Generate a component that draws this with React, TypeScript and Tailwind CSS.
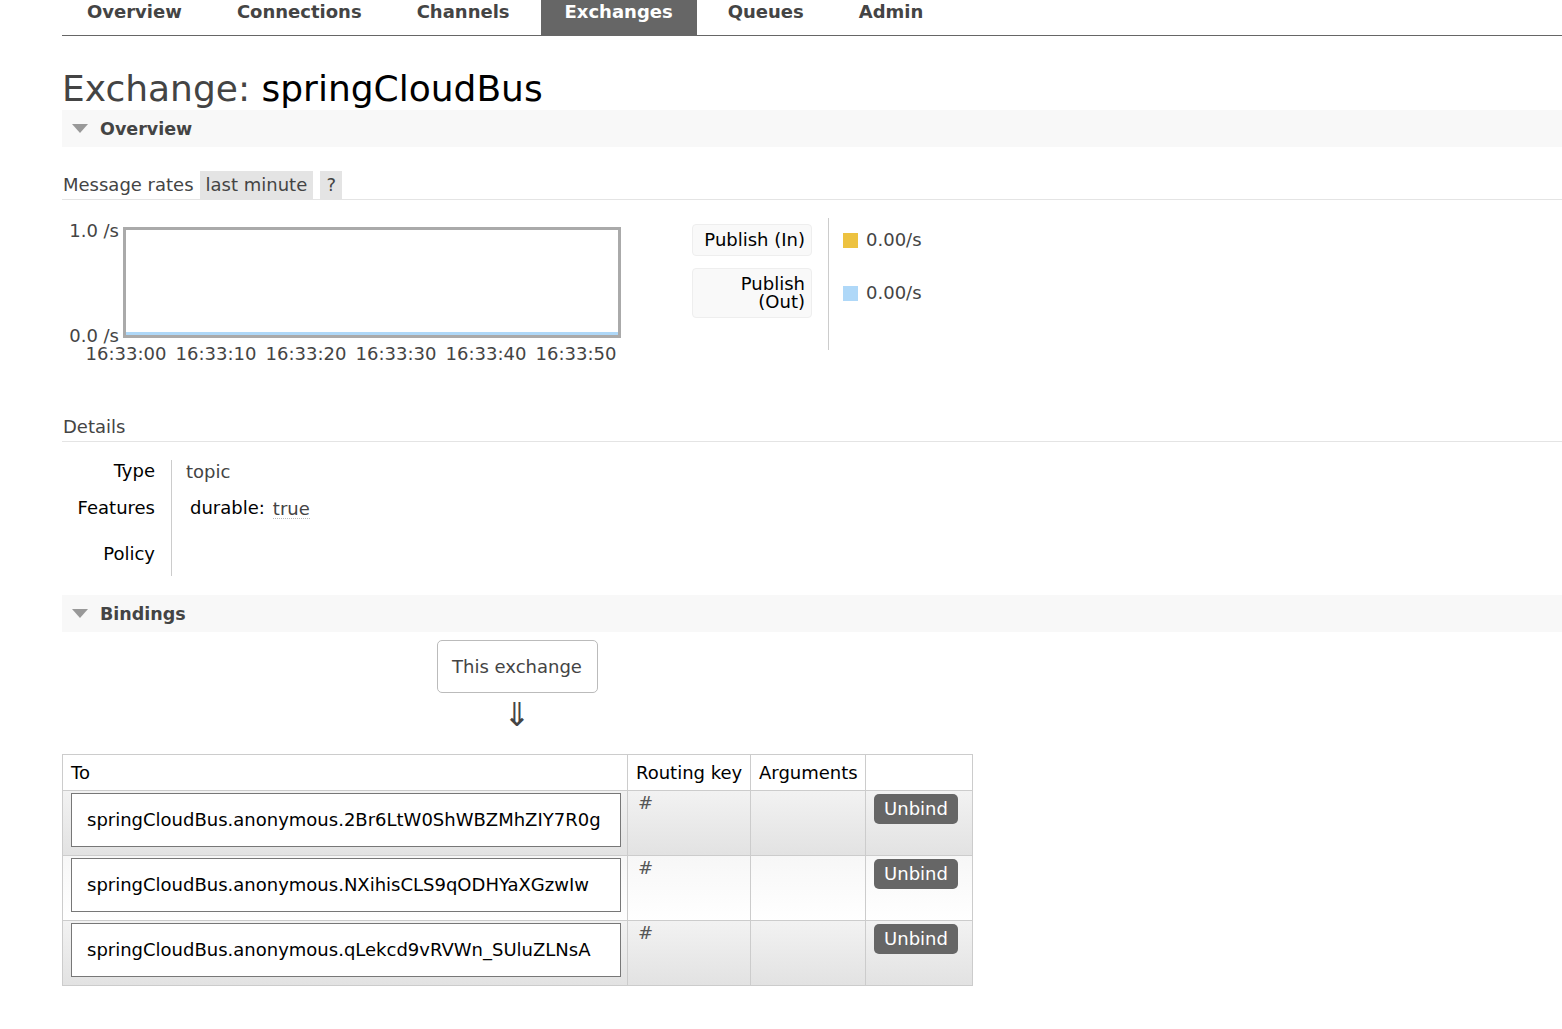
import React from "react";

const tabs = ["Overview", "Connections", "Channels", "Exchanges", "Queues", "Admin"];
const times = ["16:33:00", "16:33:10", "16:33:20", "16:33:30", "16:33:40", "16:33:50"];
const bindings = [
  "springCloudBus.anonymous.2Br6LtW0ShWBZMhZIY7R0g",
  "springCloudBus.anonymous.NXihisCLS9qODHYaXGzwIw",
  "springCloudBus.anonymous.qLekcd9vRVWn_SUluZLNsA",
];

function Toggle() {
  return (
    <svg width="16" height="9" viewBox="0 0 16 9" className="shrink-0">
      <polygon points="0,0 16,0 8,9" fill="#999" />
    </svg>
  );
}

function SectionBar({ title }: { title: string }) {
  return (
    <div className="flex h-[37px] items-center gap-[12px] bg-[#f8f8f8] pl-[10px]">
      <Toggle />
      <span className="text-[17.5px] font-bold text-[#444]">{title}</span>
    </div>
  );
}

export default function App() {
  return (
    <div className="min-h-screen bg-white pl-[62px] font-['DejaVu_Sans',Verdana,sans-serif] text-[18px] leading-[22px] text-black">
      {/* Tabs */}
      <nav className="flex h-[36px] gap-[7px] border-b border-[#666] pl-px">
        {tabs.map((t) => (
          <div
            key={t}
            className={
              t === "Exchanges"
                ? "h-[35px] bg-[#666] px-[24px] text-[18px] font-bold leading-[24px] text-white"
                : "h-[35px] px-[24px] text-[18px] font-bold leading-[24px] text-[#444]"
            }
          >
            {t}
          </div>
        ))}
      </nav>

      <h1 className="mt-[32px] text-[36px] font-normal leading-[42px] text-[#444]">
        Exchange: <span className="text-black">springCloudBus</span>
      </h1>

      <SectionBar title="Overview" />

      {/* Message rates */}
      <div className="mt-[24px] flex h-[29px] items-start border-b border-[#e4e4e4] pl-px text-[#444]">
        <span className="leading-[28px]">Message rates</span>
        <span className="ml-[6px] h-[28px] bg-[#e4e4e4] px-[6px] leading-[28px]">last minute</span>
        <span className="ml-[7px] h-[28px] w-[22px] bg-[#e4e4e4] text-center leading-[28px]">?</span>
      </div>

      <div className="mt-[18px] flex h-[150px]">
        {/* chart */}
        <div className="relative h-[150px] w-[630px] shrink-0 text-[#444]">
          <div className="absolute left-0 top-[3px] w-[57px] text-right leading-[20px]">1.0 /s</div>
          <div className="absolute left-0 top-[108px] w-[57px] text-right leading-[20px]">0.0 /s</div>
          <div className="absolute left-[61px] top-[9px] h-[111px] w-[498px] border-[3px] border-[#aaa] bg-white">
            <div className="absolute bottom-0 left-0 right-0 h-[3px] bg-[#afd8f8]" />
          </div>
          <div className="absolute left-[19px] top-[126px] flex">
            {times.map((t) => (
              <div key={t} className="w-[90px] text-center leading-[20px]">
                {t}
              </div>
            ))}
          </div>
        </div>

        {/* legend */}
        <div className="flex w-[120px] shrink-0 flex-col gap-[12px] pt-[6px] text-right">
          <div className="flex h-[32px] items-center justify-end rounded-[4px] border border-[#eee] bg-[#f9f9f9] pr-[6px]">
            Publish (In)
          </div>
          <div className="flex h-[50px] flex-col justify-center rounded-[4px] border border-[#eee] bg-[#f9f9f9] pr-[6px] leading-[18px]">
            <span>Publish</span>
            <span>(Out)</span>
          </div>
        </div>
        <div className="ml-[16px] flex h-[132px] flex-col gap-[12px] border-l border-[#ccc] pl-[14px] pt-[6px] text-[#444]">
          <div className="flex h-[32px] items-center gap-[8px]">
            <span className="h-[15px] w-[15px] bg-[#edc240]" />
            <span>0.00/s</span>
          </div>
          <div className="flex h-[50px] items-center gap-[8px]">
            <span className="h-[15px] w-[15px] bg-[#afd8f8]" />
            <span>0.00/s</span>
          </div>
        </div>
      </div>

      {/* Details */}
      <div className="mt-[48px] border-b border-[#e4e4e4] pb-[3px] pl-px text-[#444]">Details</div>

      <div className="mt-[18px] flex">
        <div className="flex w-[93px] flex-col text-right">
          <div className="h-[22px]">Type</div>
          <div className="mt-[15px] h-[22px]">Features</div>
          <div className="mt-[24px] h-[22px]">Policy</div>
          <div className="h-[11px]" />
        </div>
        <div className="ml-[16px] flex flex-col border-l border-[#ccc] pl-[14px]">
          <div className="h-[22px] pt-px text-[#444]">topic</div>
          <div className="mt-[15px] flex h-[22px] gap-[8px] pl-[4px]">
            <span>durable:</span>
            <span className="mt-px border-b border-dotted border-[#bbb] leading-[22px] text-[#444]">true</span>
          </div>
        </div>
      </div>

      <div className="mt-[19px]">
        <SectionBar title="Bindings" />
      </div>

      {/* Bindings */}
      <div className="flex w-[910px] flex-col items-center">
        <div className="mt-[8px] flex h-[53px] w-[161px] items-center justify-center rounded-[5px] border border-[#bbb] text-[#444]">
          This exchange
        </div>
        <div className="mt-[8px] h-[28px] text-[33px] leading-[28px] text-[#444]">⇓</div>
      </div>

      <table className="mt-[25px] w-[910px] table-fixed border-collapse border border-[#ccc]">
        <colgroup>
          <col className="w-[565px]" />
          <col className="w-[123px]" />
          <col className="w-[115px]" />
          <col className="w-[107px]" />
        </colgroup>
        <thead>
          <tr className="h-[36px] bg-white">
            <th className="border border-[#ccc] pl-[8px] text-left font-normal">To</th>
            <th className="border border-[#ccc] pl-[8px] text-left font-normal">Routing key</th>
            <th className="border border-[#ccc] pl-[8px] text-left font-normal">Arguments</th>
            <th className="border border-[#ccc]" />
          </tr>
        </thead>
        <tbody>
          {bindings.map((b, i) => (
            <tr
              key={b}
              className={
                i % 2 === 0
                  ? "h-[65px] bg-[linear-gradient(to_bottom,#f2f2f2,#e2e2e2)]"
                  : "h-[65px] bg-[linear-gradient(to_bottom,#f7f7f7,#ffffff)]"
              }
            >
              <td className="border border-[#ccc] pb-[7px] pl-[8px] pr-[6px] pt-[2px] align-top">
                <div className="flex h-[54px] items-center border border-[#777] bg-white pl-[15px]">{b}</div>
              </td>
              <td className="border border-[#ccc] pl-[10px] pt-px align-top leading-[22px] text-[#555]">#</td>
              <td className="border border-[#ccc]" />
              <td className="border border-[#ccc] pl-[8px] pt-[3px] align-top">
                <button className="h-[30px] w-[84px] rounded-[5px] bg-[#666] text-white">Unbind</button>
              </td>
            </tr>
          ))}
        </tbody>
      </table>
      <div className="h-[40px]" />
    </div>
  );
}
